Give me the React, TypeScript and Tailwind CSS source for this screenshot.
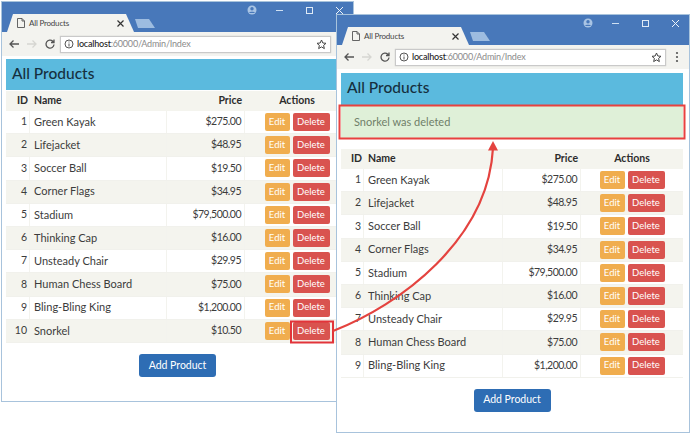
import React from "react";

const left = [
  ["1", "Green Kayak", "$275.00"],
  ["2", "Lifejacket", "$48.95"],
  ["3", "Soccer Ball", "$19.50"],
  ["4", "Corner Flags", "$34.95"],
  ["5", "Stadium", "$79,500.00"],
  ["6", "Thinking Cap", "$16.00"],
  ["7", "Unsteady Chair", "$29.95"],
  ["8", "Human Chess Board", "$75.00"],
  ["9", "Bling-Bling King", "$1,200.00"],
  ["10", "Snorkel", "$10.50"],
];

function Row({ id, name, price, even, wide }: { id: string; name: string; price: string; even: boolean; wide: boolean }) {
  return (
    <div className={`flex h-[23.2px] items-center border-b border-[#f1f1ec] text-[11px] text-[#3c3c3c] ${even ? "bg-[#f4f4ee]" : "bg-white"}`}>
      <div className={`${wide ? "w-[23px]" : "w-[24px]"} flex h-full items-center justify-end border-r border-[#f3f3ee] pr-[2px] text-[10.5px]`}>{id}</div>
      <div className={`${wide ? "w-[139px]" : "w-[137px]"} flex h-full items-center border-r border-[#f3f3ee] pl-[4px]`}>{name}</div>
      <div className="flex h-full w-[78px] items-center justify-end border-r border-[#f3f3ee] pr-[3px] text-[10.5px] tracking-[-0.5px]">{price}</div>
      <div className="flex flex-1 justify-center gap-[3px]">
        <span className="flex h-[18px] w-[25px] items-center justify-center rounded-[2px] bg-[#f0ad4e] text-[9.5px] text-white">Edit</span>
        <span className="flex h-[18px] w-[37px] items-center justify-center rounded-[2px] bg-[#d9534f] text-[9.5px] text-white">Delete</span>
      </div>
    </div>
  );
}

function Browser({ wide, alert, rows, className }: { wide: boolean; alert: boolean; rows: string[][]; className: string }) {
  return (
    <div className={`absolute flex flex-col border border-[#a8c3dc] bg-white ${className}`}>
      <div className="relative flex h-[30px] shrink-0 items-end bg-[#4878ba]">
        <div className="ml-[5px] flex h-[18px] w-[127px] items-center bg-[#f3f3ef] pl-[10px] pr-[10px] [clip-path:polygon(0_100%,6px_0,calc(100%-8px)_0,100%_100%)]">
          <svg width="8" height="10" viewBox="0 0 8 10" fill="none" stroke="#555" strokeWidth="0.9"><path d="M.5 .5h4.500l2.500 2.500v6.500h-7z M5 .5v2.500h2.500" /></svg>
          <span className="ml-[4px] flex-1 text-[8px] tracking-[-0.2px] text-[#444]">All Products</span>
          <svg width="7" height="7" viewBox="0 0 7 7" stroke="#333" strokeWidth="1.2"><path d="M.5 .5l6 6M6.500 .5l-6 6" /></svg>
        </div>
        <div className="mb-[4px] ml-[1px] h-[9px] w-[20px] bg-[#9dbce0] [clip-path:polygon(0_0,70%_0,100%_100%,15%_100%)]" />
        <div className="absolute right-[9px] top-[3px] flex items-center gap-[21px]">
          <svg className="mr-[-3px]" width="10" height="10" viewBox="0 0 10 10"><circle cx="5" cy="5" r="4.500" fill="#a9c4e4" /><circle cx="5" cy="3.800" r="1.700" fill="#4878ba" /><path d="M2 8c.6-1.800 5.400-1.800 6 0" fill="#4878ba" /></svg>
          <svg width="9" height="9" viewBox="0 0 9 9" stroke="#cfe0f2" strokeWidth="1"><path d="M1 4.500h7" /></svg>
          <svg width="9" height="9" viewBox="0 0 9 9" fill="none" stroke="#dfeaf6" strokeWidth="1"><rect x="1.500" y="1.500" width="6" height="6" /></svg>
          <svg width="9" height="9" viewBox="0 0 9 9" stroke="#eef4fa" strokeWidth="1"><path d="M1 1l7 7M8 1l-7 7" /></svg>
        </div>
      </div>
      <div className="flex h-[24px] shrink-0 items-center bg-[#f3f3ef]">
        <svg className="ml-[6px]" width="12" height="12" viewBox="0 0 12 12" fill="none" stroke="#555" strokeWidth="1.300"><path d="M11 6H2M5.500 2.500L2 6l3.500 3.500" /></svg>
        <svg className="ml-[6px]" width="12" height="12" viewBox="0 0 12 12" fill="none" stroke="#d6d6d2" strokeWidth="1.300"><path d="M1 6h9M6.500 2.500L10 6l-3.500 3.500" /></svg>
        <svg className="ml-[6px]" width="12" height="12" viewBox="0 0 12 12" fill="none" stroke="#555" strokeWidth="1.300"><path d="M10 6.500A4 4 0 1 1 8.800 3.200L10 4.400M10 1.500v3H7" /></svg>
        <div className="ml-[4px] flex h-[17px] w-[271px] items-center border border-[#c9c9c9] bg-white pl-[3px] pr-[3px] shadow-[0_0_1px_#bbb]">
          <svg width="10" height="10" viewBox="0 0 10 10" fill="none" stroke="#555" strokeWidth="1"><circle cx="5" cy="5" r="4" /><path d="M5 4.500v3M5 2.500v1" /></svg>
          <span className="ml-[3px] flex-1 text-[9px] tracking-[-0.2px]"><span className="font-medium text-[#222]">localhost</span><span className="text-[#8a8a8a]">:60000/Admin/Index</span></span>
          <svg width="11" height="11" viewBox="0 0 11 11" fill="none" stroke="#444" strokeWidth="1"><path d="M5.500 1l1.350 3 3.150.3-2.400 2.100.75 3.200-2.850-1.700-2.850 1.700.75-3.200L1 4.300 4.150 4z" /></svg>
        </div>
        {wide && <svg className="ml-[9px]" width="4" height="12" viewBox="0 0 4 12" fill="#555"><circle cx="2" cy="2" r="1.100" /><circle cx="2" cy="6" r="1.100" /><circle cx="2" cy="10" r="1.100" /></svg>}
      </div>
      <div className={`flex-1 pl-[4px] ${wide ? "pr-[6px] pt-[4px]" : "pr-[4px] pt-[3px]"}`}>
        <h1 className={`flex ${wide ? "h-[32px]" : "h-[31px]"} items-center bg-[#5bbade] pb-[2px] pl-[6px] text-[15.5px] font-medium text-[#16303f]`}>All Products</h1>
        {alert && (
          <div className="flex h-[34px] items-center bg-[#dff0d8] pl-[13px] pt-[1px] text-[11px] text-[#6f7f69]">Snorkel was deleted</div>
        )}
        <div className={`flex ${alert ? "mt-[10px]" : "mt-[1px]"} h-[20px] items-center bg-[#f4f4ee] text-[10.5px] font-bold text-[#2c2c2c]`}>
          <div className={`${wide ? "w-[23px]" : "w-[24px]"} pr-[2px] text-right`}>ID</div>
          <div className={`${wide ? "w-[139px]" : "w-[137px]"} pl-[4px]`}>Name</div>
          <div className="w-[78px] pr-[3px] text-right">Price</div>
          <div className="flex-1 text-center">Actions</div>
        </div>
        {rows.map((r, i) => (
          <Row key={r[0]} id={r[0]} name={r[1]} price={r[2]} even={i % 2 === 1} wide={wide} />
        ))}
        <div className="mt-[11px] flex justify-center">
          <span className="flex h-[23px] w-[77px] items-center justify-center rounded-[3px] bg-[#2e6db4] text-[10.5px] text-white">Add Product</span>
        </div>
      </div>
    </div>
  );
}

export default function App() {
  return (
    <div className="relative h-[433px] w-[690px] overflow-hidden bg-white [font-family:Lato,sans-serif]">
      <Browser wide={false} alert={false} rows={left} className="left-[1px] top-[1px] h-[401px] w-[353px]" />
      <Browser wide alert rows={left.slice(0, 9)} className="left-[336px] top-[14px] h-[419px] w-[354px]" />
      <svg className="absolute inset-0" width="690" height="433" fill="none">
        <rect x="291" y="321.500" width="42" height="21" stroke="#e2343a" strokeWidth="2" />
        <rect x="339.500" y="105.500" width="345" height="33" stroke="#e8413f" strokeWidth="2" />
        <path d="M333 331C400 305 488 240 493 148" stroke="#e4433f" strokeWidth="2.200" />
        <path d="M493 141l-5 9.500h10z" fill="#e4433f" />
      </svg>
    </div>
  );
}
